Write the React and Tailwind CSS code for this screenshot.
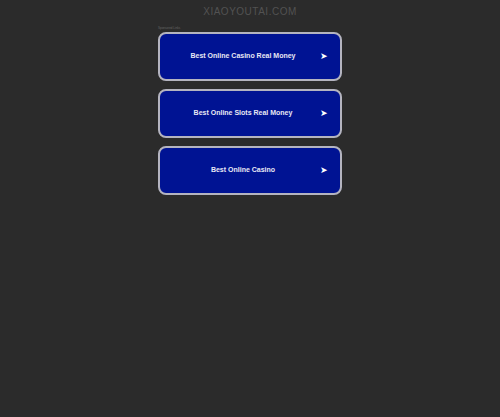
import React from 'react';

const links = [
  'Best Online Casino Real Money',
  'Best Online Slots Real Money',
  'Best Online Casino',
];

export default function App() {
  return (
    <div className="min-h-[417px] bg-[#2b2b2b] pt-[6px]" style={{ fontFamily: '"Liberation Sans", Arial, sans-serif' }}>
      <h1 className="text-center text-[10px] leading-[12px] tracking-[0.5px] text-[#525252]">XIAOYOUTAI.COM</h1>
      <div className="mx-auto w-[184px] pt-[8px]">
        <div className="text-[3px] leading-[4px] text-[#666] mb-[2px]">Sponsored Links</div>
        <div className="flex flex-col gap-[8px]">
          {links.map((label) => (
            <div
              key={label}
              className="flex h-[49px] items-center rounded-[8px] border-2 border-[#b4b4c0] bg-[#001393] pl-[6px] pr-[12px]"
            >
              <span className="flex-1 text-center text-[7px] font-bold text-[#e8e8f4]">{label}</span>
              <span className="text-[9px] leading-none text-white">➤</span>
            </div>
          ))}
        </div>
      </div>
    </div>
  );
}
